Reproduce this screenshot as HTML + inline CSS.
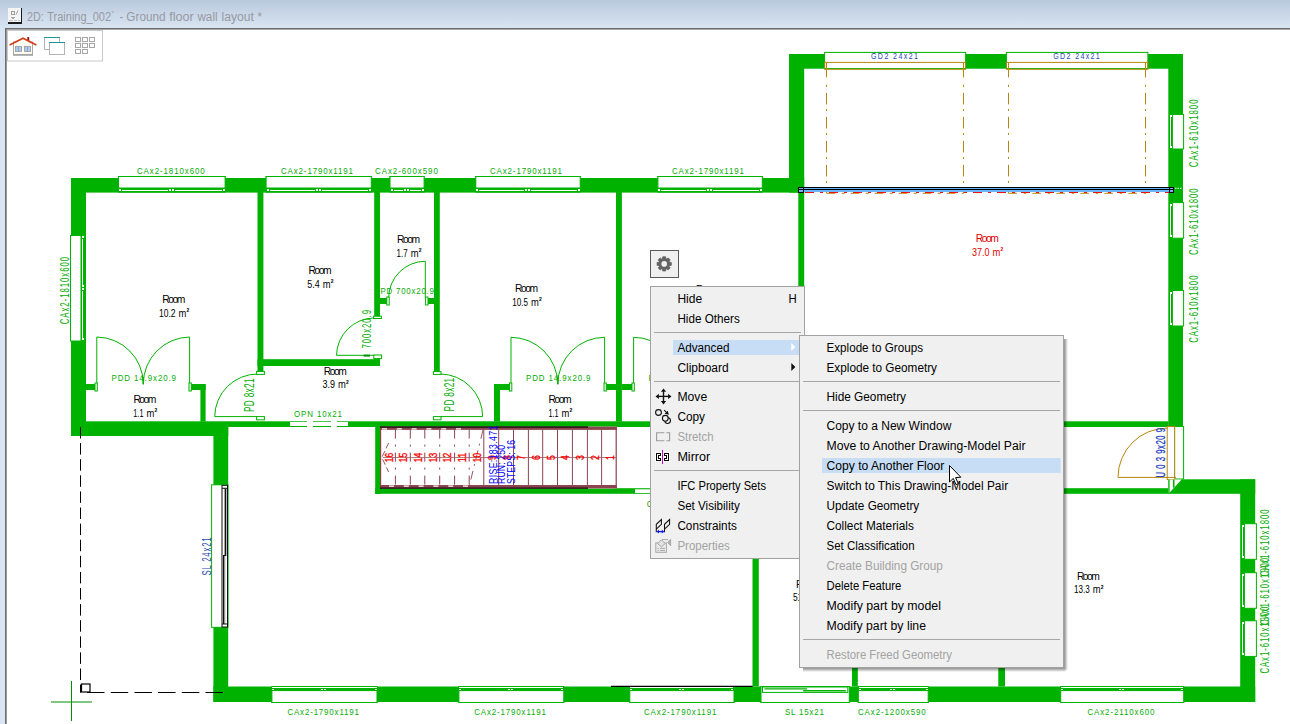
<!DOCTYPE html>
<html lang="en"><head><meta charset="utf-8"><title>2D: Training_002 - Ground floor wall layout</title>
<style>
html,body{margin:0;padding:0;background:#fff;overflow:hidden}
body{width:1290px;height:724px;position:relative;font-family:"Liberation Sans",sans-serif}
svg{position:absolute;left:0;top:0;display:block}
svg text{font-family:"Liberation Sans",sans-serif;white-space:pre}
</style></head><body>
<svg width="1290" height="724" viewBox="0 0 1290 724">
<defs>
<linearGradient id="tb" x1="0" y1="0" x2="0" y2="1"><stop offset="0" stop-color="#b9c9dd"/><stop offset="1" stop-color="#d9e5f2"/></linearGradient>
<linearGradient id="shr" x1="0" y1="0" x2="1" y2="0"><stop offset="0" stop-color="#000" stop-opacity=".42"/><stop offset=".2" stop-color="#000" stop-opacity=".36"/><stop offset="1" stop-color="#000" stop-opacity="0"/></linearGradient>
<linearGradient id="shb" x1="0" y1="0" x2="0" y2="1"><stop offset="0" stop-color="#000" stop-opacity=".42"/><stop offset=".2" stop-color="#000" stop-opacity=".36"/><stop offset="1" stop-color="#000" stop-opacity="0"/></linearGradient>
<radialGradient id="shc" cx="0" cy="0" r="1"><stop offset="0" stop-color="#000" stop-opacity=".42"/><stop offset=".2" stop-color="#000" stop-opacity=".36"/><stop offset="1" stop-color="#000" stop-opacity="0"/></radialGradient>
</defs>

<rect x="0" y="0" width="1290" height="724" fill="#fff"/>
<rect x="0" y="0" width="1290" height="29" fill="url(#tb)"/>
<rect x="0" y="28" width="5" height="696" fill="#d9e5f2"/>
<rect x="5" y="28" width="1285" height="1.6" fill="#6e6e6e"/>
<rect x="5" y="28" width="1.7" height="696" fill="#6e6e6e"/>
<g shape-rendering="crispEdges">
<rect x="8" y="8" width="14" height="16" fill="#1a1a1a"/>
<rect x="8" y="8" width="13" height="14" fill="#f4f4f4"/>
<rect x="9" y="20" width="11" height="1" fill="#c4c4c4"/><rect x="13" y="20" width="1" height="1" fill="#f4f4f4"/><rect x="17" y="20" width="1" height="1" fill="#f4f4f4"/>
<rect x="11" y="11" width="3" height="3" fill="none" stroke="#a0a0a0" stroke-width="1"/>
<rect x="11" y="17" width="4" height="1" fill="#a8a8a8"/>
<rect x="12" y="18" width="2" height="1" fill="#a8a8a8"/>
</g>
<line x1="16" y1="14.5" x2="18" y2="10.5" stroke="#a0a0a0" stroke-width="1"/>
<text x="27" y="20.7" font-size="12" fill="#9699a2" textLength="16.8" lengthAdjust="spacingAndGlyphs" >2D:</text>
<text x="47.2" y="20.7" font-size="12" fill="#9699a2" textLength="67.6" lengthAdjust="spacingAndGlyphs" >Training_002`</text>
<text x="119.4" y="20.7" font-size="12" fill="#9699a2" textLength="3.8" lengthAdjust="spacingAndGlyphs" >-</text>
<text x="126.3" y="20.7" font-size="12" fill="#9699a2" textLength="39.3" lengthAdjust="spacingAndGlyphs" >Ground</text>
<text x="169.2" y="20.7" font-size="12" fill="#9699a2" textLength="24.6" lengthAdjust="spacingAndGlyphs" >floor</text>
<text x="197.4" y="20.7" font-size="12" fill="#9699a2" textLength="20.2" lengthAdjust="spacingAndGlyphs" >wall</text>
<text x="221.6" y="20.7" font-size="12" fill="#9699a2" textLength="32.3" lengthAdjust="spacingAndGlyphs" >layout</text>
<text x="257.5" y="20.7" font-size="12" fill="#9699a2" textLength="4.5" lengthAdjust="spacingAndGlyphs" >*</text>
<rect x="7.5" y="30.5" width="95" height="30.5" fill="#fff" stroke="#c9c9c9" stroke-width="1"/>
<g>
<rect x="13.5" y="42" width="19" height="13" fill="#fffcf2" stroke="#a9a9a9" stroke-width="1"/>
<rect x="13" y="54" width="20" height="1.6" fill="#a4a4a4"/>
<polygon points="23,38.6 13.5,44.5 32.5,44.5" fill="#fffcf2"/>
<rect x="27.3" y="37" width="1.9" height="4" fill="#8c1a12"/>
<path d="M9.6 45 L23 38.2 L36.4 45" stroke="#d2401c" stroke-width="1.7" fill="none"/>
<rect x="15.5" y="46.5" width="6" height="5" fill="#aaccfa" stroke="#a0a0a0" stroke-width="0.9"/>
<rect x="24.5" y="46.5" width="6" height="5" fill="#aaccfa" stroke="#a0a0a0" stroke-width="0.9"/>
<line x1="18.5" y1="46.5" x2="18.5" y2="51.5" stroke="#a0a0a0" stroke-width="0.9"/>
<line x1="27.5" y1="46.5" x2="27.5" y2="51.5" stroke="#a0a0a0" stroke-width="0.9"/>
</g>
<g shape-rendering="crispEdges">
<rect x="44.5" y="37.5" width="15" height="12" fill="#fff" stroke="#b4b4b4" stroke-width="1"/>
<rect x="44" y="37" width="16" height="1.4" fill="#1f9595"/>
<rect x="49.5" y="42.5" width="15" height="12" fill="#fff" stroke="#b4b4b4" stroke-width="1"/>
<rect x="49" y="42" width="16" height="1.4" fill="#1f9595"/>
</g>
<g shape-rendering="crispEdges" fill="#fff" stroke="#a6a6a6" stroke-width="1">
<rect x="75.5" y="37.5" width="5" height="4"/>
<rect x="82.5" y="37.5" width="5" height="4"/>
<rect x="89.5" y="37.5" width="5" height="4"/>
<rect x="75.5" y="43.5" width="5" height="4"/>
<rect x="82.5" y="43.5" width="5" height="4"/>
<rect x="89.5" y="43.5" width="5" height="4"/>
<rect x="75.5" y="49.5" width="5" height="4"/>
<rect x="82.5" y="49.5" width="5" height="4"/>
</g>
<g id="plan">
<text x="696" y="292.5" font-size="10.3" fill="#000" textLength="23" lengthAdjust="spacing">Room</text>
<text x="692.9" y="306.1" font-size="10.3" fill="#000" textLength="16.2" lengthAdjust="spacingAndGlyphs">16.2</text>
<text x="712.1" y="306.1" font-size="10.3" fill="#000" textLength="7.8" lengthAdjust="spacingAndGlyphs">m</text>
<text x="720.1" y="301.5" font-size="5.4" font-weight="bold" fill="#000" textLength="2.8" lengthAdjust="spacingAndGlyphs">2</text>
<text x="796" y="587.5" font-size="10.3" fill="#000" textLength="23" lengthAdjust="spacing">Room</text>
<text x="792.9" y="601.1" font-size="10.3" fill="#000" textLength="16.2" lengthAdjust="spacingAndGlyphs">51.4</text>
<text x="812.1" y="601.1" font-size="10.3" fill="#000" textLength="7.8" lengthAdjust="spacingAndGlyphs">m</text>
<text x="820.1" y="596.5" font-size="5.4" font-weight="bold" fill="#000" textLength="2.8" lengthAdjust="spacingAndGlyphs">2</text>
<rect x="71" y="178" width="733.2" height="14.6" fill="#00b200" />
<rect x="71" y="178" width="15" height="258" fill="#00b200" />
<rect x="71" y="421.3" width="157.4" height="14.7" fill="#00b200" />
<rect x="228" y="421.3" width="940.5" height="5.7" fill="#00b200" />
<rect x="257.5" y="192" width="5.9" height="180" fill="#00b200" />
<rect x="257.5" y="359.2" width="122.5" height="6.8" fill="#00b200" />
<rect x="374.2" y="192" width="5.8" height="125.4" fill="#00b200" />
<rect x="374.2" y="355.5" width="5.8" height="10.5" fill="#00b200" />
<rect x="434" y="192" width="5.8" height="180" fill="#00b200" />
<rect x="616" y="192" width="5.9" height="229.5" fill="#00b200" />
<rect x="798.3" y="192" width="5.9" height="229.5" fill="#00b200" />
<rect x="86" y="384" width="9" height="6" fill="#00b200" />
<rect x="191" y="384" width="14.6" height="6" fill="#00b200" />
<rect x="200.4" y="384" width="5.2" height="37.5" fill="#00b200" />
<rect x="380" y="298" width="7" height="6" fill="#00b200" />
<rect x="427.8" y="298" width="6.2" height="6" fill="#00b200" />
<rect x="494" y="384" width="16" height="6" fill="#00b200" />
<rect x="494" y="384" width="6" height="37.5" fill="#00b200" />
<rect x="606" y="384" width="10" height="6" fill="#00b200" />
<rect x="622" y="384" width="10" height="6" fill="#00b200" />
<rect x="738" y="384" width="10" height="6" fill="#00b200" />
<rect x="742" y="384" width="6" height="37.5" fill="#00b200" />
<rect x="375.2" y="427" width="5.4" height="67" fill="#00b200" />
<rect x="375.2" y="488.2" width="793.8" height="5.6" fill="#00b200" />
<rect x="213.4" y="436" width="14.8" height="266" fill="#00b200" />
<rect x="213.4" y="686.5" width="1041.8" height="15.5" fill="#00b200" />
<rect x="1240.2" y="479.3" width="15" height="222.7" fill="#00b200" />
<rect x="752.5" y="493.8" width="6.3" height="192.7" fill="#00b200" />
<rect x="852" y="493.8" width="5.8" height="192.7" fill="#00b200" />
<rect x="998.3" y="493.8" width="6.7" height="192.7" fill="#00b200" />
<rect x="789" y="54" width="15.2" height="138.6" fill="#00b200" />
<rect x="789" y="54" width="394" height="14.7" fill="#00b200" />
<rect x="1168.3" y="54" width="14.7" height="373" fill="#00b200" />
<rect x="1168.3" y="479.3" width="86.9" height="14.5" fill="#00b200" />
<rect x="118" y="176" width="107.6" height="16.6" fill="#00b200" />
<rect x="118.5" y="176.5" width="106.6" height="11.5" fill="#fff" stroke="#00b200" stroke-width="1" />
<g shape-rendering="crispEdges" fill="#fff">
<rect x="119" y="189" width="2" height="2" fill="#fff" />
<rect x="169" y="189" width="2" height="2" fill="#fff" />
<rect x="172" y="189" width="2" height="2" fill="#fff" />
<rect x="223" y="189" width="2" height="2" fill="#fff" />
<rect x="122" y="190" width="46" height="1" fill="#fff" />
<rect x="175" y="190" width="47" height="1" fill="#fff" />
</g>
<text transform="translate(137 174) scale(0.8 1)" x="0" y="0" font-size="9.9" fill="#06ac06" textLength="84.62" lengthAdjust="spacing">CAx2-1810x600</text>
<rect x="265.6" y="176" width="106.2" height="16.6" fill="#00b200" />
<rect x="266.1" y="176.5" width="105.2" height="11.5" fill="#fff" stroke="#00b200" stroke-width="1" />
<g shape-rendering="crispEdges" fill="#fff">
<rect x="267" y="189" width="2" height="2" fill="#fff" />
<rect x="316" y="189" width="2" height="2" fill="#fff" />
<rect x="319" y="189" width="2" height="2" fill="#fff" />
<rect x="369" y="189" width="2" height="2" fill="#fff" />
<rect x="270" y="190" width="45" height="1" fill="#fff" />
<rect x="322" y="190" width="46" height="1" fill="#fff" />
</g>
<text transform="translate(281 174) scale(0.8 1)" x="0" y="0" font-size="9.9" fill="#06ac06" textLength="90.00" lengthAdjust="spacing">CAx2-1790x1191</text>
<rect x="389.5" y="176" width="35.1" height="16.6" fill="#00b200" />
<rect x="390" y="176.5" width="34.1" height="11.5" fill="#fff" stroke="#00b200" stroke-width="1" />
<g shape-rendering="crispEdges" fill="#fff">
<rect x="391" y="189" width="2" height="2" fill="#fff" />
<rect x="404" y="189" width="2" height="2" fill="#fff" />
<rect x="407" y="189" width="2" height="2" fill="#fff" />
<rect x="422" y="189" width="2" height="2" fill="#fff" />
<rect x="394" y="190" width="9" height="1" fill="#fff" />
<rect x="410" y="190" width="11" height="1" fill="#fff" />
</g>
<text transform="translate(375 174) scale(0.8 1)" x="0" y="0" font-size="9.9" fill="#06ac06" textLength="78.50" lengthAdjust="spacing">CAx2-600x590</text>
<rect x="475.3" y="176" width="105.4" height="16.6" fill="#00b200" />
<rect x="475.8" y="176.5" width="104.4" height="11.5" fill="#fff" stroke="#00b200" stroke-width="1" />
<g shape-rendering="crispEdges" fill="#fff">
<rect x="476" y="189" width="2" height="2" fill="#fff" />
<rect x="525" y="189" width="2" height="2" fill="#fff" />
<rect x="528" y="189" width="2" height="2" fill="#fff" />
<rect x="578" y="189" width="2" height="2" fill="#fff" />
<rect x="479" y="190" width="45" height="1" fill="#fff" />
<rect x="531" y="190" width="46" height="1" fill="#fff" />
</g>
<text transform="translate(490 174) scale(0.8 1)" x="0" y="0" font-size="9.9" fill="#06ac06" textLength="90.00" lengthAdjust="spacing">CAx2-1790x1191</text>
<rect x="657.4" y="176" width="105.4" height="16.6" fill="#00b200" />
<rect x="657.9" y="176.5" width="104.4" height="11.5" fill="#fff" stroke="#00b200" stroke-width="1" />
<g shape-rendering="crispEdges" fill="#fff">
<rect x="658" y="189" width="2" height="2" fill="#fff" />
<rect x="707" y="189" width="2" height="2" fill="#fff" />
<rect x="710" y="189" width="2" height="2" fill="#fff" />
<rect x="760" y="189" width="2" height="2" fill="#fff" />
<rect x="661" y="190" width="45" height="1" fill="#fff" />
<rect x="713" y="190" width="46" height="1" fill="#fff" />
</g>
<text transform="translate(672 174) scale(0.8 1)" x="0" y="0" font-size="9.9" fill="#06ac06" textLength="90.00" lengthAdjust="spacing">CAx2-1790x1191</text>
<rect x="271.4" y="686" width="106.1" height="17" fill="#00b200" />
<rect x="271.9" y="690.6" width="105.1" height="11.9" fill="#fff" stroke="#00b200" stroke-width="1" />
<g shape-rendering="crispEdges" fill="#fff">
<rect x="272" y="687" width="105" height="1" fill="#fff" />
<rect x="272" y="689" width="2" height="1" fill="#fff" />
<rect x="321" y="689" width="2" height="1" fill="#fff" />
<rect x="324" y="689" width="2" height="1" fill="#fff" />
<rect x="375" y="689" width="2" height="1" fill="#fff" />
</g>
<text transform="translate(287.4 715) scale(0.8 1)" x="0" y="0" font-size="9.9" fill="#06ac06" textLength="89.50" lengthAdjust="spacing">CAx2-1790x1191</text>
<rect x="458.4" y="686" width="105.9" height="17" fill="#00b200" />
<rect x="458.9" y="690.6" width="104.9" height="11.9" fill="#fff" stroke="#00b200" stroke-width="1" />
<g shape-rendering="crispEdges" fill="#fff">
<rect x="459" y="687" width="104" height="1" fill="#fff" />
<rect x="459" y="689" width="2" height="1" fill="#fff" />
<rect x="508" y="689" width="2" height="1" fill="#fff" />
<rect x="511" y="689" width="2" height="1" fill="#fff" />
<rect x="561" y="689" width="2" height="1" fill="#fff" />
</g>
<text transform="translate(474.3 715) scale(0.8 1)" x="0" y="0" font-size="9.9" fill="#06ac06" textLength="89.62" lengthAdjust="spacing">CAx2-1790x1191</text>
<rect x="629.3" y="686" width="105.2" height="17" fill="#00b200" />
<rect x="629.8" y="690.6" width="104.2" height="11.9" fill="#fff" stroke="#00b200" stroke-width="1" />
<g shape-rendering="crispEdges" fill="#fff">
<rect x="630" y="687" width="103" height="1" fill="#fff" />
<rect x="630" y="689" width="2" height="1" fill="#fff" />
<rect x="679" y="689" width="2" height="1" fill="#fff" />
<rect x="682" y="689" width="2" height="1" fill="#fff" />
<rect x="731" y="689" width="2" height="1" fill="#fff" />
</g>
<text transform="translate(644 715) scale(0.8 1)" x="0" y="0" font-size="9.9" fill="#06ac06" textLength="90.50" lengthAdjust="spacing">CAx2-1790x1191</text>
<rect x="760.5" y="686" width="89.3" height="17" fill="#00b200" />
<rect x="761" y="686.5" width="88.3" height="16" fill="#fff" stroke="#00b200" stroke-width="1" />
<rect x="762.5" y="687" width="85.3" height="5.4" fill="#fff" stroke="#00b200" stroke-width="1" />
<line x1="764.5" y1="688.9" x2="807.15" y2="688.9" stroke="#00b200" stroke-width="1.4" />
<line x1="803.15" y1="690.7" x2="845.8" y2="690.7" stroke="#00b200" stroke-width="1.4" />
<text transform="translate(785 715) scale(0.8 1)" x="0" y="0" font-size="9.9" fill="#06ac06" textLength="48.75" lengthAdjust="spacing">SL 15x21</text>
<rect x="857.8" y="686" width="70.9" height="17" fill="#00b200" />
<rect x="858.3" y="690.6" width="69.9" height="11.9" fill="#fff" stroke="#00b200" stroke-width="1" />
<g shape-rendering="crispEdges" fill="#fff">
<rect x="859" y="687" width="69" height="1" fill="#fff" />
<rect x="859" y="689" width="2" height="1" fill="#fff" />
<rect x="890" y="689" width="2" height="1" fill="#fff" />
<rect x="893" y="689" width="2" height="1" fill="#fff" />
<rect x="926" y="689" width="2" height="1" fill="#fff" />
</g>
<text transform="translate(858 715) scale(0.8 1)" x="0" y="0" font-size="9.9" fill="#06ac06" textLength="84.63" lengthAdjust="spacing">CAx2-1200x590</text>
<rect x="1060.2" y="686" width="124" height="17" fill="#00b200" />
<rect x="1060.7" y="690.6" width="123" height="11.9" fill="#fff" stroke="#00b200" stroke-width="1" />
<g shape-rendering="crispEdges" fill="#fff">
<rect x="1061" y="687" width="122" height="1" fill="#fff" />
<rect x="1061" y="689" width="2" height="1" fill="#fff" />
<rect x="1119" y="689" width="2" height="1" fill="#fff" />
<rect x="1122" y="689" width="2" height="1" fill="#fff" />
<rect x="1181" y="689" width="2" height="1" fill="#fff" />
</g>
<text transform="translate(1087.4 715) scale(0.8 1)" x="0" y="0" font-size="9.9" fill="#06ac06" textLength="83.87" lengthAdjust="spacing">CAx2-2110x600</text>
<rect x="70.5" y="235.5" width="10.5" height="105.5" fill="#fff" stroke="#00b200" stroke-width="1" />
<g shape-rendering="crispEdges">
<rect x="82" y="239" width="1" height="46" fill="#fff" />
<rect x="82" y="291" width="1" height="47" fill="#fff" />
<rect x="82" y="236" width="2" height="2" fill="#fff" />
<rect x="82" y="285" width="2" height="2" fill="#fff" />
<rect x="82" y="288" width="2" height="2" fill="#fff" />
<rect x="82" y="338" width="2" height="2" fill="#fff" />
</g>
<text transform="translate(69.2 324.2) rotate(-90) scale(0.6 1)" x="0" y="0" font-size="13" fill="#06ac06" textLength="112.17" lengthAdjust="spacing">CAx2-1810x600</text>
<rect x="1244.4" y="523.7" width="12" height="35.6" fill="#fff" stroke="#00b200" stroke-width="1" />
<g shape-rendering="crispEdges">
<rect x="1242" y="526.7" width="1" height="29.6" fill="#fff" />
<rect x="1242" y="524.7" width="2" height="2" fill="#fff" />
<rect x="1242" y="556.3" width="2" height="2" fill="#fff" />
</g>
<text transform="translate(1269.4 576.5) rotate(-90) scale(0.6 1)" x="0" y="0" font-size="13" fill="#06ac06" textLength="111.67" lengthAdjust="spacing">CAx1-610x1800</text>
<rect x="1244.4" y="572.7" width="12" height="35.6" fill="#fff" stroke="#00b200" stroke-width="1" />
<g shape-rendering="crispEdges">
<rect x="1242" y="575.7" width="1" height="29.6" fill="#fff" />
<rect x="1242" y="573.7" width="2" height="2" fill="#fff" />
<rect x="1242" y="605.3" width="2" height="2" fill="#fff" />
</g>
<text transform="translate(1269.4 625) rotate(-90) scale(0.6 1)" x="0" y="0" font-size="13" fill="#06ac06" textLength="111.67" lengthAdjust="spacing">CAx1-610x1800</text>
<rect x="1244.4" y="620.8" width="12" height="35.6" fill="#fff" stroke="#00b200" stroke-width="1" />
<g shape-rendering="crispEdges">
<rect x="1242" y="623.8" width="1" height="29.6" fill="#fff" />
<rect x="1242" y="621.8" width="2" height="2" fill="#fff" />
<rect x="1242" y="653.4" width="2" height="2" fill="#fff" />
</g>
<text transform="translate(1269.4 673.6) rotate(-90) scale(0.6 1)" x="0" y="0" font-size="13" fill="#06ac06" textLength="111.67" lengthAdjust="spacing">CAx1-610x1800</text>
<rect x="1172.4" y="114.4" width="11.2" height="34.6" fill="#fff" stroke="#00b200" stroke-width="1" />
<g shape-rendering="crispEdges">
<rect x="1170" y="117.4" width="1" height="28.6" fill="#fff" />
<rect x="1170" y="115.4" width="2" height="2" fill="#fff" />
<rect x="1170" y="146" width="2" height="2" fill="#fff" />
</g>
<rect x="1172.4" y="202.6" width="11.2" height="35.6" fill="#fff" stroke="#00b200" stroke-width="1" />
<g shape-rendering="crispEdges">
<rect x="1170" y="205.6" width="1" height="29.6" fill="#fff" />
<rect x="1170" y="203.6" width="2" height="2" fill="#fff" />
<rect x="1170" y="235.2" width="2" height="2" fill="#fff" />
</g>
<rect x="1172.4" y="290.5" width="11.2" height="35.5" fill="#fff" stroke="#00b200" stroke-width="1" />
<g shape-rendering="crispEdges">
<rect x="1170" y="293.5" width="1" height="29.5" fill="#fff" />
<rect x="1170" y="291.5" width="2" height="2" fill="#fff" />
<rect x="1170" y="323" width="2" height="2" fill="#fff" />
</g>
<text transform="translate(1197.6 167.2) rotate(-90) scale(0.6 1)" x="0" y="0" font-size="13" fill="#06ac06" textLength="112.83" lengthAdjust="spacing">CAx1-610x1800</text>
<text transform="translate(1197.6 255.1) rotate(-90) scale(0.6 1)" x="0" y="0" font-size="13" fill="#06ac06" textLength="111.17" lengthAdjust="spacing">CAx1-610x1800</text>
<text transform="translate(1197.6 342.7) rotate(-90) scale(0.6 1)" x="0" y="0" font-size="13" fill="#06ac06" textLength="112.00" lengthAdjust="spacing">CAx1-610x1800</text>
<rect x="211.6" y="484.8" width="16.4" height="142.5" fill="#fff" stroke="#00b200" stroke-width="1" />
<rect x="222" y="485.3" width="5.5" height="141.7" fill="#fff" stroke="#111" stroke-width="1" />
<line x1="224.8" y1="488" x2="224.8" y2="624" stroke="#9a9a9a" stroke-width="1" />
<line x1="225.6" y1="489" x2="225.6" y2="556" stroke="#111" stroke-width="1.4" />
<line x1="223.6" y1="555" x2="223.6" y2="624" stroke="#111" stroke-width="1.2" />
<line x1="223" y1="555.5" x2="226" y2="555.5" stroke="#111" stroke-width="1" />
<line x1="222" y1="488.3" x2="227.5" y2="488.3" stroke="#111" stroke-width="1" />
<line x1="222" y1="624" x2="227.5" y2="624" stroke="#111" stroke-width="1" />
<text transform="translate(210.5 575.6) rotate(-90) scale(0.6 1)" x="0" y="0" font-size="13" fill="#2348b8" textLength="63.67" lengthAdjust="spacing">SL 24x21</text>
<line x1="96.8" y1="337" x2="96.8" y2="384.5" stroke="#00b200" stroke-width="1" />
<path d="M96.8 337 A47 47 0 0 1 143.3 384" stroke="#00b200" stroke-width="1" fill="none" />
<line x1="189.6" y1="337" x2="189.6" y2="384.5" stroke="#00b200" stroke-width="1" />
<path d="M189.6 337 A47 47 0 0 0 143.3 384" stroke="#00b200" stroke-width="1" fill="none" />
<line x1="143.3" y1="377" x2="143.3" y2="384.5" stroke="#00b200" stroke-width="1.3" />
<rect x="95" y="383" width="2.3" height="8" fill="#fff" stroke="#00b200" stroke-width="1" />
<rect x="189" y="383" width="2.3" height="8" fill="#fff" stroke="#00b200" stroke-width="1" />
<text transform="translate(111.5 381.3) scale(0.8 1)" x="0" y="0" font-size="9.9" fill="#06ac06" textLength="80.62" lengthAdjust="spacing">PDD 14.9x20.9</text>
<line x1="511" y1="337.3" x2="511" y2="384.5" stroke="#00b200" stroke-width="1" />
<path d="M511 337.3 A47 47 0 0 1 557.8 384" stroke="#00b200" stroke-width="1" fill="none" />
<line x1="604.6" y1="337.3" x2="604.6" y2="384.5" stroke="#00b200" stroke-width="1" />
<path d="M604.6 337.3 A47 47 0 0 0 557.8 384" stroke="#00b200" stroke-width="1" fill="none" />
<line x1="557.8" y1="377" x2="557.8" y2="384.5" stroke="#00b200" stroke-width="1.3" />
<rect x="509.5" y="383" width="2.3" height="8" fill="#fff" stroke="#00b200" stroke-width="1" />
<rect x="604" y="383" width="2.3" height="8" fill="#fff" stroke="#00b200" stroke-width="1" />
<text transform="translate(526 381.3) scale(0.8 1)" x="0" y="0" font-size="9.9" fill="#06ac06" textLength="80.62" lengthAdjust="spacing">PDD 14.9x20.9</text>
<line x1="633.6" y1="337.3" x2="633.6" y2="384.5" stroke="#00b200" stroke-width="1" />
<path d="M633.6 337.3 A47 47 0 0 1 680.4 384" stroke="#00b200" stroke-width="1" fill="none" />
<rect x="632" y="383" width="2.3" height="8" fill="#fff" stroke="#00b200" stroke-width="1" />
<text transform="translate(648.6 381.3) scale(0.8 1)" x="0" y="0" font-size="9.9" fill="#06ac06" textLength="80.50" lengthAdjust="spacing">PDD 14.9x20.9</text>
<line x1="425.3" y1="261.2" x2="425.3" y2="298.5" stroke="#00b200" stroke-width="1" />
<path d="M425.3 261.2 A37 37 0 0 0 388.6 298" stroke="#00b200" stroke-width="1" fill="none" />
<rect x="386.8" y="297" width="2.4" height="8" fill="#fff" stroke="#00b200" stroke-width="1" />
<rect x="425.6" y="297" width="2.4" height="8" fill="#fff" stroke="#00b200" stroke-width="1" />
<text transform="translate(380.5 294.3) scale(0.8 1)" x="0" y="0" font-size="9.9" fill="#06ac06" textLength="66.88" lengthAdjust="spacing">PD 700x20.9</text>
<line x1="336.5" y1="355.3" x2="374.5" y2="355.3" stroke="#00b200" stroke-width="1" />
<path d="M336.5 355.3 A38 38 0 0 1 374.2 318" stroke="#00b200" stroke-width="1" fill="none" />
<rect x="373.6" y="316.2" width="7.8" height="2.3" fill="#fff" stroke="#00b200" stroke-width="1" />
<rect x="373.8" y="355" width="7.8" height="3.6" fill="#fff" stroke="#00b200" stroke-width="1" />
<rect x="363.6" y="354.6" width="6.4" height="2" fill="#079007" />
<text transform="translate(371 348.5) rotate(-90) scale(0.6 1)" x="0" y="0" font-size="13" fill="#06ac06" textLength="64.17" lengthAdjust="spacing">700x20.9</text>
<line x1="214.7" y1="416.6" x2="258" y2="416.6" stroke="#00b200" stroke-width="1" />
<path d="M214.7 416.6 A43 43 0 0 1 257.8 374" stroke="#00b200" stroke-width="1" fill="none" />
<rect x="256.6" y="371.4" width="7.8" height="3" fill="#fff" stroke="#00b200" stroke-width="1" />
<rect x="256.6" y="416.6" width="7.8" height="3.2" fill="#fff" stroke="#00b200" stroke-width="1" />
<text transform="translate(254.4 412) rotate(-90) scale(0.6 1)" x="0" y="0" font-size="13.8" fill="#06ac06" textLength="56.00" lengthAdjust="spacing">PD 8x21</text>
<line x1="440" y1="416.6" x2="482.6" y2="416.6" stroke="#00b200" stroke-width="1" />
<path d="M482.6 416.6 A42.6 42.6 0 0 0 440.4 374" stroke="#00b200" stroke-width="1" fill="none" />
<rect x="433.4" y="371.6" width="7.6" height="2.8" fill="#fff" stroke="#00b200" stroke-width="1" />
<rect x="433.4" y="416.6" width="7.6" height="3.2" fill="#fff" stroke="#00b200" stroke-width="1" />
<text transform="translate(454.2 411.4) rotate(-90) scale(0.6 1)" x="0" y="0" font-size="13.8" fill="#06ac06" textLength="56.00" lengthAdjust="spacing">PD 8x21</text>
<g shape-rendering="crispEdges">
<rect x="290" y="422" width="58" height="4" fill="#fff" />
<rect x="307" y="421" width="6" height="6" fill="#fff" />
<rect x="331" y="421" width="6" height="6" fill="#fff" />
</g>
<text transform="translate(294 417.3) scale(0.8 1)" x="0" y="0" font-size="9.9" fill="#06ac06" textLength="60.00" lengthAdjust="spacing">OPN 10x21</text>
<rect x="635" y="489.3" width="65" height="3.7" fill="#fff" />
<text transform="translate(646.7 506.6) scale(0.8 1)" x="0" y="0" font-size="9.9" fill="#06ac06" textLength="86.62" lengthAdjust="spacing">CAx2-1200x590</text>
<rect x="1174.6" y="426.5" width="9" height="52.5" fill="#fff" stroke="#00b200" stroke-width="1" />
<rect x="1167.2" y="426.5" width="7.4" height="53" fill="#fff" stroke="#b8860b" stroke-width="1" />
<line x1="1118" y1="477.4" x2="1176" y2="477.4" stroke="#b8860b" stroke-width="1" />
<path d="M1118 477.4 A49.3 49.3 0 0 1 1167.2 428.1" stroke="#b8860b" stroke-width="1" fill="none" />
<g stroke="#1c3cc0" stroke-width=".3">
<text transform="translate(1165.1 477.4) rotate(-90) scale(0.6 1)" x="0" y="0" font-size="13" fill="#1c3cc0" textLength="82.33" lengthAdjust="spacing">U 0 3 9x20 9</text>
</g>
<polygon points="1168.3,479.5 1181.6,479.5 1168.3,493.9" fill="#fff"/>
<rect x="1168.3" y="479.5" width="1.3" height="14.4" fill="#00b200" />
<rect x="1172.9" y="479.5" width="1.6" height="8.1" fill="#00b200" />
<rect x="824.6" y="52.4" width="141" height="16.2" fill="#fff" stroke="#00b200" stroke-width="1" />
<rect x="824.6" y="62.4" width="141" height="6.9" fill="none" stroke="#b8860b" stroke-width="1" />
<line x1="826.5" y1="62.4" x2="826.5" y2="77.4" stroke="#b8860b" stroke-width="1" />
<line x1="826.5" y1="84.8" x2="826.5" y2="86.9" stroke="#b8860b" stroke-width="1" />
<line x1="826.5" y1="92.9" x2="826.5" y2="193.3" stroke="#b8860b" stroke-width="1" stroke-dasharray="11.5 4.6 2 5.9"/>
<line x1="963.5" y1="62.4" x2="963.5" y2="77.4" stroke="#b8860b" stroke-width="1" />
<line x1="963.5" y1="84.8" x2="963.5" y2="86.9" stroke="#b8860b" stroke-width="1" />
<line x1="963.5" y1="92.9" x2="963.5" y2="193.3" stroke="#b8860b" stroke-width="1" stroke-dasharray="11.5 4.6 2 5.9"/>
<line x1="826.6" y1="193.3" x2="963.6" y2="193.3" stroke="#b8860b" stroke-width="1" stroke-dasharray="8.6 6.6 2.7 6.1"/>
<text transform="translate(871 59) scale(0.8 1)" x="0" y="0" font-size="8.8" fill="#2348b8" textLength="58.75" lengthAdjust="spacing">GD2 24x21</text>
<rect x="1006.4" y="52.4" width="141.5" height="16.2" fill="#fff" stroke="#00b200" stroke-width="1" />
<rect x="1006.4" y="62.4" width="141.5" height="6.9" fill="none" stroke="#b8860b" stroke-width="1" />
<line x1="1008.5" y1="62.4" x2="1008.5" y2="77.4" stroke="#b8860b" stroke-width="1" />
<line x1="1008.5" y1="84.8" x2="1008.5" y2="86.9" stroke="#b8860b" stroke-width="1" />
<line x1="1008.5" y1="92.9" x2="1008.5" y2="193.3" stroke="#b8860b" stroke-width="1" stroke-dasharray="11.5 4.6 2 5.9"/>
<line x1="1145.5" y1="62.4" x2="1145.5" y2="77.4" stroke="#b8860b" stroke-width="1" />
<line x1="1145.5" y1="84.8" x2="1145.5" y2="86.9" stroke="#b8860b" stroke-width="1" />
<line x1="1145.5" y1="92.9" x2="1145.5" y2="193.3" stroke="#b8860b" stroke-width="1" stroke-dasharray="11.5 4.6 2 5.9"/>
<line x1="1008.4" y1="193.3" x2="1145.9" y2="193.3" stroke="#b8860b" stroke-width="1" stroke-dasharray="8.6 6.6 2.7 6.1"/>
<text transform="translate(1053.3 59) scale(0.8 1)" x="0" y="0" font-size="8.8" fill="#2348b8" textLength="58.12" lengthAdjust="spacing">GD2 24x21</text>
<g shape-rendering="crispEdges">
<rect x="798" y="187" width="376" height="5" fill="#6cb4f8" />
<rect x="798" y="187" width="376" height="1" fill="#000" />
<rect x="798" y="189" width="376" height="1" fill="#000" />
<rect x="798" y="187" width="1" height="6" fill="#000" />
<rect x="803" y="187" width="1" height="6" fill="#000" />
<rect x="798" y="192" width="6" height="1" fill="#000" />
<rect x="1169" y="187" width="1" height="6" fill="#000" />
<rect x="1173" y="187" width="1" height="6" fill="#000" />
<rect x="1169" y="192" width="5" height="1" fill="#000" />
</g>
<line x1="805" y1="192.5" x2="1169" y2="192.5" stroke="#f01010" stroke-width="1.1" stroke-dasharray="9 6 3 6"/>
<line x1="1175" y1="188.3" x2="1182.5" y2="188.3" stroke="#fff" stroke-width="1" stroke-dasharray="1.5 1"/>
<rect x="380" y="426.6" width="236.8" height="61.8" fill="#fff" />
<rect x="380" y="426.6" width="236.8" height="3.3" fill="#8c4450" />
<rect x="380" y="485" width="236.8" height="3.4" fill="#8c4450" />
<rect x="380" y="426.6" width="1.2" height="61.8" fill="#8c4450" />
<rect x="615.6" y="426.6" width="1.2" height="61.8" fill="#8c4450" />
<rect x="380" y="426.4" width="208" height="1.2" fill="#000" />
<rect x="380" y="487.6" width="208" height="1.1" fill="#000" />
<line x1="382" y1="428.8" x2="470" y2="428.8" stroke="#fff" stroke-width="1.3" stroke-dasharray="5 9.8"/>
<line x1="389" y1="486.2" x2="470" y2="486.2" stroke="#fff" stroke-width="1.3" stroke-dasharray="5 9.8"/>
<line x1="395.4" y1="429.6" x2="395.4" y2="485.4" stroke="#8c4450" stroke-width="1" stroke-dasharray="9 6 2 6"/>
<line x1="410.3" y1="429.6" x2="410.3" y2="485.4" stroke="#8c4450" stroke-width="1" stroke-dasharray="9 6 2 6"/>
<line x1="424.8" y1="429.6" x2="424.8" y2="485.4" stroke="#8c4450" stroke-width="1" stroke-dasharray="9 6 2 6"/>
<line x1="439.7" y1="429.6" x2="439.7" y2="485.4" stroke="#8c4450" stroke-width="1" stroke-dasharray="9 6 2 6"/>
<line x1="454.6" y1="429.6" x2="454.6" y2="485.4" stroke="#8c4450" stroke-width="1" stroke-dasharray="9 6 2 6"/>
<line x1="469.2" y1="429.6" x2="469.2" y2="485.4" stroke="#8c4450" stroke-width="1" stroke-dasharray="9 6 2 6"/>
<line x1="483.8" y1="429.6" x2="483.8" y2="485.4" stroke="#8c4450" stroke-width="1" />
<line x1="498.7" y1="429.6" x2="498.7" y2="485.4" stroke="#8c4450" stroke-width="1" />
<line x1="513.5" y1="429.6" x2="513.5" y2="485.4" stroke="#8c4450" stroke-width="1" />
<line x1="528.4" y1="429.6" x2="528.4" y2="485.4" stroke="#8c4450" stroke-width="1" />
<line x1="542.7" y1="429.6" x2="542.7" y2="485.4" stroke="#8c4450" stroke-width="1" />
<line x1="557.5" y1="429.6" x2="557.5" y2="485.4" stroke="#8c4450" stroke-width="1" />
<line x1="572.4" y1="429.6" x2="572.4" y2="485.4" stroke="#8c4450" stroke-width="1" />
<line x1="587.4" y1="429.6" x2="587.4" y2="485.4" stroke="#8c4450" stroke-width="1" />
<line x1="601.6" y1="429.6" x2="601.6" y2="485.4" stroke="#8c4450" stroke-width="1" />
<line x1="383" y1="457.5" x2="616" y2="457.5" stroke="#a05a5a" stroke-width="0.8" />
<path d="M388.6 443 L381.8 457.5 L388.6 472" stroke="#8c4450" stroke-width="0.9" fill="none" stroke-dasharray="6 3"/>
<path d="M483 430 L469.5 485" stroke="#8c4450" stroke-width="0.9" fill="none" stroke-dasharray="9 5 2 5"/>
<text x="393.1" y="462.2" font-size="11" fill="#f00" textLength="9.4" lengthAdjust="spacingAndGlyphs" transform="rotate(-90 393.1 462.2)" stroke="#f00" stroke-width=".35">16</text>
<text x="407.4" y="462.2" font-size="11" fill="#f00" textLength="9.4" lengthAdjust="spacingAndGlyphs" transform="rotate(-90 407.4 462.2)" stroke="#f00" stroke-width=".35">15</text>
<text x="422" y="462.2" font-size="11" fill="#f00" textLength="9.4" lengthAdjust="spacingAndGlyphs" transform="rotate(-90 422 462.2)" stroke="#f00" stroke-width=".35">14</text>
<text x="436.7" y="462.2" font-size="11" fill="#f00" textLength="9.4" lengthAdjust="spacingAndGlyphs" transform="rotate(-90 436.7 462.2)" stroke="#f00" stroke-width=".35">13</text>
<text x="451.5" y="462.2" font-size="11" fill="#f00" textLength="9.4" lengthAdjust="spacingAndGlyphs" transform="rotate(-90 451.5 462.2)" stroke="#f00" stroke-width=".35">12</text>
<text x="466.2" y="462.2" font-size="11" fill="#f00" textLength="9.4" lengthAdjust="spacingAndGlyphs" transform="rotate(-90 466.2 462.2)" stroke="#f00" stroke-width=".35">11</text>
<text x="480.8" y="462.2" font-size="11" fill="#f00" textLength="9.4" lengthAdjust="spacingAndGlyphs" transform="rotate(-90 480.8 462.2)" stroke="#f00" stroke-width=".35">10</text>
<text x="524.8" y="460" font-size="11" fill="#f00" textLength="4.8" lengthAdjust="spacingAndGlyphs" transform="rotate(-90 524.8 460)" stroke="#f00" stroke-width=".35">7</text>
<text x="540.2" y="460" font-size="11" fill="#f00" textLength="4.8" lengthAdjust="spacingAndGlyphs" transform="rotate(-90 540.2 460)" stroke="#f00" stroke-width=".35">6</text>
<text x="555.1" y="460" font-size="11" fill="#f00" textLength="4.8" lengthAdjust="spacingAndGlyphs" transform="rotate(-90 555.1 460)" stroke="#f00" stroke-width=".35">5</text>
<text x="569.2" y="460" font-size="11" fill="#f00" textLength="4.8" lengthAdjust="spacingAndGlyphs" transform="rotate(-90 569.2 460)" stroke="#f00" stroke-width=".35">4</text>
<text x="584.2" y="460" font-size="11" fill="#f00" textLength="4.8" lengthAdjust="spacingAndGlyphs" transform="rotate(-90 584.2 460)" stroke="#f00" stroke-width=".35">3</text>
<text x="599.2" y="460" font-size="11" fill="#f00" textLength="4.8" lengthAdjust="spacingAndGlyphs" transform="rotate(-90 599.2 460)" stroke="#f00" stroke-width=".35">2</text>
<text x="614" y="460" font-size="11" fill="#f00" textLength="4.8" lengthAdjust="spacingAndGlyphs" transform="rotate(-90 614 460)" stroke="#f00" stroke-width=".35">1</text>
<text x="510.6" y="460" font-size="11" fill="#f00" textLength="4.8" lengthAdjust="spacingAndGlyphs" transform="rotate(-90 510.6 460)" stroke="#f00" stroke-width=".35">8</text>
<text x="495.7" y="460" font-size="11" fill="#f00" textLength="4.8" lengthAdjust="spacingAndGlyphs" transform="rotate(-90 495.7 460)" stroke="#f00" stroke-width=".35">9</text>
<text transform="translate(496.5 484) rotate(-90) scale(0.74 1)" x="0" y="0" font-size="11.8" fill="#0000ff" textLength="78.92" lengthAdjust="spacing">RISE:183.471</text>
<text transform="translate(505.3 484) rotate(-90) scale(0.74 1)" x="0" y="0" font-size="11.8" fill="#0000ff" textLength="52.70" lengthAdjust="spacing">RUN: 250</text>
<text transform="translate(514.5 484) rotate(-90) scale(0.74 1)" x="0" y="0" font-size="11.8" fill="#0000ff" textLength="59.46" lengthAdjust="spacing">STEPS: 16</text>
<line x1="611" y1="686.3" x2="752.6" y2="686.3" stroke="#000" stroke-width="1.2" />
<text x="162.3" y="303" font-size="10.3" fill="#000" textLength="23" lengthAdjust="spacing">Room</text>
<text x="159" y="316.6" font-size="10.3" fill="#000" textLength="16.6" lengthAdjust="spacingAndGlyphs">10.2</text>
<text x="178.6" y="316.6" font-size="10.3" fill="#000" textLength="7.8" lengthAdjust="spacingAndGlyphs">m</text>
<text x="186.6" y="312" font-size="5.4" font-weight="bold" fill="#000" textLength="2.8" lengthAdjust="spacingAndGlyphs">2</text>
<text x="308.5" y="274" font-size="10.3" fill="#000" textLength="23" lengthAdjust="spacing">Room</text>
<text x="307.25" y="287.6" font-size="10.3" fill="#000" textLength="12.5" lengthAdjust="spacingAndGlyphs">5.4</text>
<text x="322.75" y="287.6" font-size="10.3" fill="#000" textLength="7.8" lengthAdjust="spacingAndGlyphs">m</text>
<text x="330.75" y="283" font-size="5.4" font-weight="bold" fill="#000" textLength="2.8" lengthAdjust="spacingAndGlyphs">2</text>
<text x="397.1" y="243" font-size="10.3" fill="#000" textLength="23" lengthAdjust="spacing">Room</text>
<text x="396.55" y="256.6" font-size="10.3" fill="#000" textLength="11.1" lengthAdjust="spacingAndGlyphs">1.7</text>
<text x="410.65" y="256.6" font-size="10.3" fill="#000" textLength="7.8" lengthAdjust="spacingAndGlyphs">m</text>
<text x="418.65" y="252" font-size="5.4" font-weight="bold" fill="#000" textLength="2.8" lengthAdjust="spacingAndGlyphs">2</text>
<text x="515.1" y="292" font-size="10.3" fill="#000" textLength="23" lengthAdjust="spacing">Room</text>
<text x="512.2" y="305.6" font-size="10.3" fill="#000" textLength="15.8" lengthAdjust="spacingAndGlyphs">10.5</text>
<text x="531" y="305.6" font-size="10.3" fill="#000" textLength="7.8" lengthAdjust="spacingAndGlyphs">m</text>
<text x="539" y="301" font-size="5.4" font-weight="bold" fill="#000" textLength="2.8" lengthAdjust="spacingAndGlyphs">2</text>
<text x="323.8" y="374.7" font-size="10.3" fill="#000" textLength="23" lengthAdjust="spacing">Room</text>
<text x="322.55" y="388.3" font-size="10.3" fill="#000" textLength="12.5" lengthAdjust="spacingAndGlyphs">3.9</text>
<text x="338.05" y="388.3" font-size="10.3" fill="#000" textLength="7.8" lengthAdjust="spacingAndGlyphs">m</text>
<text x="346.05" y="383.7" font-size="5.4" font-weight="bold" fill="#000" textLength="2.8" lengthAdjust="spacingAndGlyphs">2</text>
<text x="133.4" y="403" font-size="10.3" fill="#000" textLength="23" lengthAdjust="spacing">Room</text>
<text x="133.3" y="416.6" font-size="10.3" fill="#000" textLength="10.2" lengthAdjust="spacingAndGlyphs">1.1</text>
<text x="146.5" y="416.6" font-size="10.3" fill="#000" textLength="7.8" lengthAdjust="spacingAndGlyphs">m</text>
<text x="154.5" y="412" font-size="5.4" font-weight="bold" fill="#000" textLength="2.8" lengthAdjust="spacingAndGlyphs">2</text>
<text x="548.5" y="403" font-size="10.3" fill="#000" textLength="23" lengthAdjust="spacing">Room</text>
<text x="548.4" y="416.6" font-size="10.3" fill="#000" textLength="10.2" lengthAdjust="spacingAndGlyphs">1.1</text>
<text x="561.6" y="416.6" font-size="10.3" fill="#000" textLength="7.8" lengthAdjust="spacingAndGlyphs">m</text>
<text x="569.6" y="412" font-size="5.4" font-weight="bold" fill="#000" textLength="2.8" lengthAdjust="spacingAndGlyphs">2</text>
<text x="975.8" y="242" font-size="10.3" fill="#e00000" textLength="23" lengthAdjust="spacing">Room</text>
<text x="972.1" y="255.6" font-size="10.3" fill="#e00000" textLength="17.4" lengthAdjust="spacingAndGlyphs">37.0</text>
<text x="992.5" y="255.6" font-size="10.3" fill="#e00000" textLength="7.8" lengthAdjust="spacingAndGlyphs">m</text>
<text x="1000.5" y="251" font-size="5.4" font-weight="bold" fill="#e00000" textLength="2.8" lengthAdjust="spacingAndGlyphs">2</text>
<text x="1076.9" y="579.6" font-size="10.3" fill="#000" textLength="23" lengthAdjust="spacing">Room</text>
<text x="1074.05" y="593.2" font-size="10.3" fill="#000" textLength="15.7" lengthAdjust="spacingAndGlyphs">13.3</text>
<text x="1092.75" y="593.2" font-size="10.3" fill="#000" textLength="7.8" lengthAdjust="spacingAndGlyphs">m</text>
<text x="1100.75" y="588.6" font-size="5.4" font-weight="bold" fill="#000" textLength="2.8" lengthAdjust="spacingAndGlyphs">2</text>
<line x1="80.5" y1="427" x2="80.5" y2="692.5" stroke="#000" stroke-width="1" stroke-dasharray="11.5 4.6"/>
<line x1="223" y1="692.5" x2="80.5" y2="692.5" stroke="#000" stroke-width="1" stroke-dasharray="17.5 6.2"/>
<rect x="81.5" y="684" width="8.5" height="8" fill="#fff" stroke="#000" stroke-width="1.2" />
<line x1="51" y1="702" x2="92" y2="702" stroke="#009000" stroke-width="1" />
<line x1="71.5" y1="681" x2="71.5" y2="721" stroke="#009000" stroke-width="1" />
</g>
<rect x="650.5" y="250.5" width="28" height="27" fill="#f0f0f0" stroke="#5a5a5a" stroke-width="1" shape-rendering="crispEdges"/>
<polygon points="669.45,262.27 671.26,262.47 671.26,265.33 669.45,265.53 669.06,266.47 670.20,267.88 668.18,269.90 666.77,268.76 665.83,269.15 665.63,270.96 662.77,270.96 662.57,269.15 661.63,268.76 660.22,269.90 658.20,267.88 659.34,266.47 658.95,265.53 657.14,265.33 657.14,262.47 658.95,262.27 659.34,261.33 658.20,259.92 660.22,257.90 661.63,259.04 662.57,258.65 662.77,256.84 665.63,256.84 665.83,258.65 666.77,259.04 668.18,257.90 670.20,259.92 669.06,261.33" fill="#646464" stroke="#646464" stroke-width="0.9" stroke-linejoin="round"/>
<circle cx="664.2" cy="263.9" r="5.6" fill="#646464"/>
<circle cx="664.2" cy="263.9" r="2.8" fill="#f0f0f0"/>
<rect x="650.5" y="286.5" width="154" height="272" fill="#f0f0f0" stroke="#a2a2a2" stroke-width="1"/>
<rect x="673" y="340" width="126.5" height="15" fill="#c6ddf5"/>
<text x="677.4" y="302.7" font-size="12" fill="#000" textLength="24.7" lengthAdjust="spacingAndGlyphs" >Hide</text>
<text x="677.4" y="322.8" font-size="12" fill="#000" textLength="62.4" lengthAdjust="spacingAndGlyphs" >Hide Others</text>
<text x="677.4" y="351.7" font-size="12" fill="#000" textLength="52" lengthAdjust="spacingAndGlyphs" >Advanced</text>
<text x="677.4" y="371.8" font-size="12" fill="#000" textLength="51.3" lengthAdjust="spacingAndGlyphs" >Clipboard</text>
<text x="677.4" y="400.7" font-size="12" fill="#000" textLength="29.8" lengthAdjust="spacingAndGlyphs" >Move</text>
<text x="677.4" y="420.7" font-size="12" fill="#000" textLength="27.6" lengthAdjust="spacingAndGlyphs" >Copy</text>
<text x="677.4" y="440.7" font-size="12" fill="#a3a3a3" textLength="36.2" lengthAdjust="spacingAndGlyphs" >Stretch</text>
<text x="677.4" y="461" font-size="12" fill="#000" textLength="32.8" lengthAdjust="spacingAndGlyphs" >Mirror</text>
<text x="677.4" y="489.7" font-size="12" fill="#000" textLength="88.6" lengthAdjust="spacingAndGlyphs" >IFC Property Sets</text>
<text x="677.4" y="509.8" font-size="12" fill="#000" textLength="62.4" lengthAdjust="spacingAndGlyphs" >Set Visibility</text>
<text x="677.4" y="530" font-size="12" fill="#000" textLength="59.4" lengthAdjust="spacingAndGlyphs" >Constraints</text>
<text x="677.4" y="550" font-size="12" fill="#a3a3a3" textLength="52.4" lengthAdjust="spacingAndGlyphs" >Properties</text>
<text x="788.6" y="302.7" font-size="12" fill="#000" textLength="8.2" lengthAdjust="spacingAndGlyphs" >H</text>
<rect x="654" y="332" width="147" height="1" fill="#a6a6a6" shape-rendering="crispEdges"/>
<rect x="654" y="381" width="147" height="1" fill="#a6a6a6" shape-rendering="crispEdges"/>
<rect x="654" y="470" width="147" height="1" fill="#a6a6a6" shape-rendering="crispEdges"/>
<polygon points="791.3,343 795.4,347 791.3,351" fill="#fff"/>
<polygon points="791.3,363 795.4,367 791.3,371" fill="#111"/>
<g stroke="#111" stroke-width="1.35" fill="#111">
<line x1="657" y1="396.4" x2="670" y2="396.4"/><line x1="663.5" y1="390" x2="663.5" y2="403"/>
<polygon points="663.5,388.4 660.9,391.8 666.1,391.8" stroke="none"/><polygon points="663.5,404.4 660.9,401 666.1,401" stroke="none"/>
<polygon points="655.5,396.4 658.9,393.8 658.9,399" stroke="none"/><polygon points="671.5,396.4 668.1,393.8 668.1,399" stroke="none"/>
</g>
<g stroke="#111" stroke-width="1.1" fill="none">
<circle cx="658.5" cy="412.5" r="2.9"/><circle cx="667.6" cy="420.6" r="2.9"/>
<circle cx="665.3" cy="418.3" r="2.9" fill="#f0f0f0"/>
<line x1="664.2" y1="410.2" x2="667.2" y2="413.1"/>
<polygon points="668.9,414.7 667.7,410.7 664.7,413.8" fill="#111" stroke="none"/>
</g>
<g stroke="#9a9a9a" stroke-width="1.1" fill="none">
<path d="M664.4 432.8 H656.6 V440.8 H664.4" /><path d="M666.4 432.8 H669.6 V440.8 H666.4"/>
</g>
<g shape-rendering="crispEdges">
<rect x="655" y="452" width="7" height="10" fill="#fff" fill-opacity=".85"/><rect x="663" y="452" width="7" height="10" fill="#fff" fill-opacity=".85"/>
<rect x="656" y="453" width="5" height="1" fill="#000"/>
<rect x="656" y="460" width="5" height="1" fill="#000"/>
<rect x="656" y="453" width="1" height="8" fill="#000"/>
<rect x="660" y="453" width="1" height="3" fill="#000"/>
<rect x="660" y="458" width="1" height="3" fill="#000"/>
<rect x="658" y="455" width="3" height="1" fill="#000"/>
<rect x="658" y="458" width="3" height="1" fill="#000"/>
<rect x="658" y="455" width="1" height="4" fill="#000"/>
<rect x="664" y="453" width="5" height="1" fill="#000"/>
<rect x="664" y="460" width="5" height="1" fill="#000"/>
<rect x="668" y="453" width="1" height="8" fill="#000"/>
<rect x="664" y="453" width="1" height="3" fill="#000"/>
<rect x="664" y="458" width="1" height="3" fill="#000"/>
<rect x="664" y="455" width="3" height="1" fill="#000"/>
<rect x="664" y="458" width="3" height="1" fill="#000"/>
<rect x="666" y="455" width="1" height="4" fill="#000"/>
<rect x="662" y="450" width="1" height="14" fill="#c400c4"/>
</g>
<g stroke="#111" stroke-width="1.05" fill="none" stroke-linejoin="miter">
<path d="M656.3 532.2 V524.3 L661.4 519.5 V524.3 L656.3 529.2"/>
<path d="M664.5 532.2 V524.3 L669.6 519.5 V524.3 L664.5 529.2"/>
</g>
<path d="M657.2 531.6 H663.6" stroke="#0a18ff" stroke-width="1.3" fill="none"/>
<polygon points="656.6,531.6 659,529.8 659,533.4" fill="#0a18ff"/><polygon points="664.2,531.6 661.8,529.8 661.8,533.4" fill="#0a18ff"/>
<g stroke="#a8a8a8" stroke-width="1" fill="none">
<rect x="655.8" y="542.9" width="10.6" height="9.4" fill="#ececec"/>
<path d="M657.4 548.3 H658.8 M660 548.3 H665 M657.4 550.4 H658.8 M660 550.4 H665"/>
<polygon points="657.6,543.6 661.4,539.8 665.2,543.6 661.4,546.8" fill="#e2e2e2"/>
<path d="M662 539.6 H668"/>
<polygon points="667.6,542.4 670.6,539.2 670.6,545.6" fill="#b4b4b4"/>
</g>
<rect x="1064" y="339" width="4" height="329" fill="url(#shr)"/>
<rect x="803" y="668" width="261" height="4" fill="url(#shb)"/>
<rect x="1064" y="668" width="4" height="4" fill="url(#shc)"/>
<rect x="799.5" y="335.5" width="264" height="332" fill="#f0f0f0" stroke="#a2a2a2" stroke-width="1"/>
<rect x="822" y="458" width="238.6" height="15" fill="#c6ddf5"/>
<text x="826.5" y="351.7" font-size="12" fill="#000" textLength="96.5" lengthAdjust="spacingAndGlyphs" >Explode to Groups</text>
<text x="826.5" y="371.8" font-size="12" fill="#000" textLength="110.5" lengthAdjust="spacingAndGlyphs" >Explode to Geometry</text>
<text x="826.5" y="400.7" font-size="12" fill="#000" textLength="79.5" lengthAdjust="spacingAndGlyphs" >Hide Geometry</text>
<text x="826.5" y="429.7" font-size="12" fill="#000" textLength="124.8" lengthAdjust="spacingAndGlyphs" >Copy to a New Window</text>
<text x="826.5" y="449.7" font-size="12" fill="#000" textLength="199" lengthAdjust="spacingAndGlyphs" >Move to Another Drawing-Model Pair</text>
<text x="826.5" y="469.7" font-size="12" fill="#000" textLength="117.8" lengthAdjust="spacingAndGlyphs" >Copy to Another Floor</text>
<text x="826.5" y="489.7" font-size="12" fill="#000" textLength="181.6" lengthAdjust="spacingAndGlyphs" >Switch to This Drawing-Model Pair</text>
<text x="826.5" y="509.8" font-size="12" fill="#000" textLength="92.7" lengthAdjust="spacingAndGlyphs" >Update Geometry</text>
<text x="826.5" y="529.8" font-size="12" fill="#000" textLength="87.3" lengthAdjust="spacingAndGlyphs" >Collect Materials</text>
<text x="826.5" y="549.8" font-size="12" fill="#000" textLength="88.1" lengthAdjust="spacingAndGlyphs" >Set Classification</text>
<text x="826.5" y="569.8" font-size="12" fill="#a3a3a3" textLength="116.4" lengthAdjust="spacingAndGlyphs" >Create Building Group</text>
<text x="826.5" y="589.8" font-size="12" fill="#000" textLength="74.8" lengthAdjust="spacingAndGlyphs" >Delete Feature</text>
<text x="826.5" y="609.8" font-size="12" fill="#000" textLength="114.4" lengthAdjust="spacingAndGlyphs" >Modify part by model</text>
<text x="826.5" y="629.8" font-size="12" fill="#000" textLength="99.5" lengthAdjust="spacingAndGlyphs" >Modify part by line</text>
<text x="826.5" y="658.8" font-size="12" fill="#a3a3a3" textLength="125.4" lengthAdjust="spacingAndGlyphs" >Restore Freed Geometry</text>
<rect x="803" y="381" width="257" height="1" fill="#a6a6a6" shape-rendering="crispEdges"/>
<rect x="803" y="410" width="257" height="1" fill="#a6a6a6" shape-rendering="crispEdges"/>
<rect x="803" y="639" width="257" height="1" fill="#a6a6a6" shape-rendering="crispEdges"/>
<path d="M949.5 465.5 V482 L953.3 478.4 L956 484.6 L958.3 483.6 L955.6 477.6 L960.8 477.2 Z" fill="#fff" stroke="#000" stroke-width="1" stroke-linejoin="miter"/>
</svg></body></html>
